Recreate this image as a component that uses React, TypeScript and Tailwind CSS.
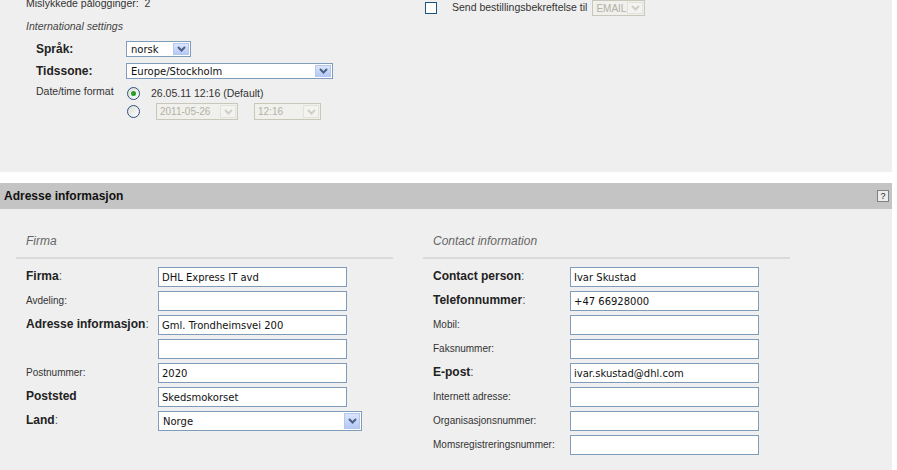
import React from "react";

const mono = "font-['DejaVu_Sans',sans-serif]";

function Arrow({ disabled }: { disabled?: boolean }) {
  return (
    <span
      className={
        disabled
          ? "flex h-full w-[16px] shrink-0 items-center justify-center border border-[#e3e2da] bg-[#f3f3ef]"
          : "flex h-full w-[16px] shrink-0 items-center justify-center border border-[#b4c7f1] bg-gradient-to-b from-[#dbe6fc] to-[#b5c9f5]"
      }
    >
      <svg width="9" height="6" viewBox="0 0 9 6">
        <path d="M1 1 L4.5 4.5 L8 1" stroke={disabled ? "#cfcfc8" : "#4d6185"} strokeWidth="2" fill="none" />
      </svg>
    </span>
  );
}

function Select({ value, className, disabled }: { value: string; className: string; disabled?: boolean }) {
  return (
    <div
      className={`${className} flex items-stretch p-[1px] ${
        disabled ? "border border-[#c9c7ba] bg-[#f0f0ec] text-[#b3b1a6]" : "border border-[#7f9db9] bg-white text-[#111]"
      }`}
    >
      <span className={disabled ? "flex flex-1 items-center pl-[2px]" : `flex flex-1 items-center pl-[3px] ${mono}`}>{value}</span>
      <Arrow disabled={disabled} />
    </div>
  );
}

function Field({ value = "" }: { value?: string }) {
  return (
    <div className={`flex h-[20px] w-[189px] items-center border border-[#7f9db9] bg-white pl-[3px] text-[10px] text-[#111] ${mono}`}>
      {value}
    </div>
  );
}

function Radio({ checked }: { checked?: boolean }) {
  return (
    <span className="flex h-[13px] w-[13px] shrink-0 items-center justify-center rounded-full border border-[#2a5380] bg-gradient-to-br from-[#dcdcd6] to-white">
      {checked && <span className="h-[5px] w-[5px] rounded-full bg-[#25a025]" />}
    </span>
  );
}

type Row = { label: string; bold?: boolean; value?: string; select?: boolean };

const firma: Row[] = [
  { label: "Firma", bold: true, value: "DHL Express IT avd" },
  { label: "Avdeling" },
  { label: "Adresse informasjon", bold: true, value: "Gml. Trondheimsvei 200" },
  { label: "" },
  { label: "Postnummer", value: "2020" },
  { label: "Poststed", bold: true, value: "Skedsmokorset" },
  { label: "Land", bold: true, value: "Norge", select: true },
];

const contact: Row[] = [
  { label: "Contact person", bold: true, value: "Ivar Skustad" },
  { label: "Telefonnummer", bold: true, value: "+47 66928000" },
  { label: "Mobil" },
  { label: "Faksnummer" },
  { label: "E-post", bold: true, value: "ivar.skustad@dhl.com" },
  { label: "Internett adresse" },
  { label: "Organisasjonsnummer" },
  { label: "Momsregistreringsnummer" },
];

function Label({ row }: { row: Row }) {
  if (!row.label) return null;
  if (row.label === "Poststed") {
    return <span className="text-[12px] font-bold text-[#222]">Poststed</span>;
  }
  return row.bold ? (
    <span className="text-[12px] text-[#222]">
      <span className="font-bold">{row.label}</span>
      <span className="text-[#555]">:</span>
    </span>
  ) : (
    <span className="text-[10px] text-[#333]">{row.label}:</span>
  );
}

function Section({ title, rows, labelWidth, className }: { title: string; rows: Row[]; labelWidth: string; className: string }) {
  return (
    <div className={className}>
      <div className="pl-[10px] pt-[25px] text-[12px] italic leading-[14px] text-[#666]">{title}</div>
      <div className="mt-[9px] h-[2px] bg-[#dadada]" />
      <div className="mt-[8px] flex flex-col gap-[4px] pl-[10px]">
        {rows.map((r, i) => (
          <div key={i} className="flex h-[20px] items-center">
            <div className={`${labelWidth} pb-[5px]`}>
              <Label row={r} />
            </div>
            {r.select ? (
              <Select value={r.value ?? ""} className="h-[20px] w-[204px] text-[10px]" />
            ) : (
              <Field value={r.value} />
            )}
          </div>
        ))}
      </div>
    </div>
  );
}

export default function App() {
  return (
    <div className="h-[470px] w-[897px] overflow-hidden bg-white font-['Liberation_Sans',Arial,sans-serif]">
      <div className="flex h-[172px] w-[892px] bg-[#efefef]">
        <div className="w-[425px] pl-[26px]">
          <div className="-mt-[3px] text-[10.5px] leading-[12px] text-[#333]">Mislykkede pålogginger:&nbsp;&nbsp;2</div>
          <div className="mt-[11px] text-[10.5px] italic leading-[12px] text-[#444]">International settings</div>
          <div className="pl-[10px]">
            <div className="mt-[9px] flex h-[16px] items-center">
              <span className="w-[90px] text-[12px] font-bold text-[#222]">Språk:</span>
              <Select value="norsk" className="h-[16px] w-[65px] text-[10px]" />
            </div>
            <div className="mt-[6px] flex h-[16px] items-center">
              <span className="w-[90px] text-[12px] font-bold text-[#222]">Tidssone:</span>
              <Select value="Europe/Stockholm" className="h-[16px] w-[207px] text-[10px]" />
            </div>
            <div className="mt-[6px] flex h-[17px] items-center">
              <span className="w-[91px] pb-[4px] text-[10.5px] text-[#333]">Date/time format</span>
              <Radio checked />
              <span className="ml-[11px] text-[10.5px] text-[#333]">26.05.11 12:16 (Default)</span>
            </div>
            <div className="mt-[1px] flex h-[17px] items-center pl-[91px]">
              <Radio />
              <Select value="2011-05-26" disabled className="ml-[16px] h-[17px] w-[82px] text-[10px]" />
              <Select value="12:16" disabled className="ml-[16px] h-[17px] w-[67px] text-[10px]" />
            </div>
          </div>
        </div>
        <div className="flex h-[16px] items-center">
          <span className="h-[12px] w-[12px] border border-[#1c5180] bg-white" />
          <span className="ml-[15px] text-[10.5px] text-[#333]">Send bestillingsbekreftelse til</span>
          <Select value="EMAIL" disabled className="ml-[5px] h-[16px] w-[53px] text-[10px]" />
        </div>
      </div>

      <div className="mt-[11px] flex h-[26px] w-[892px] items-center justify-between bg-[#c4c4c4] pl-[4px] pr-[3px]">
        <span className="text-[12px] font-bold text-[#111]">Adresse informasjon</span>
        <span className="flex h-[12px] w-[12px] items-center justify-center border border-[#808080] bg-[#ececec] text-[9px] leading-none text-[#222]">
          ?
        </span>
      </div>

      <div className="flex h-[261px] w-[892px] bg-[#efefef] pl-[16px]">
        <Section title="Firma" rows={firma} labelWidth="w-[132px]" className="w-[377px]" />
        <Section title="Contact information" rows={contact} labelWidth="w-[137px]" className="ml-[30px] w-[367px]" />
      </div>
    </div>
  );
}
